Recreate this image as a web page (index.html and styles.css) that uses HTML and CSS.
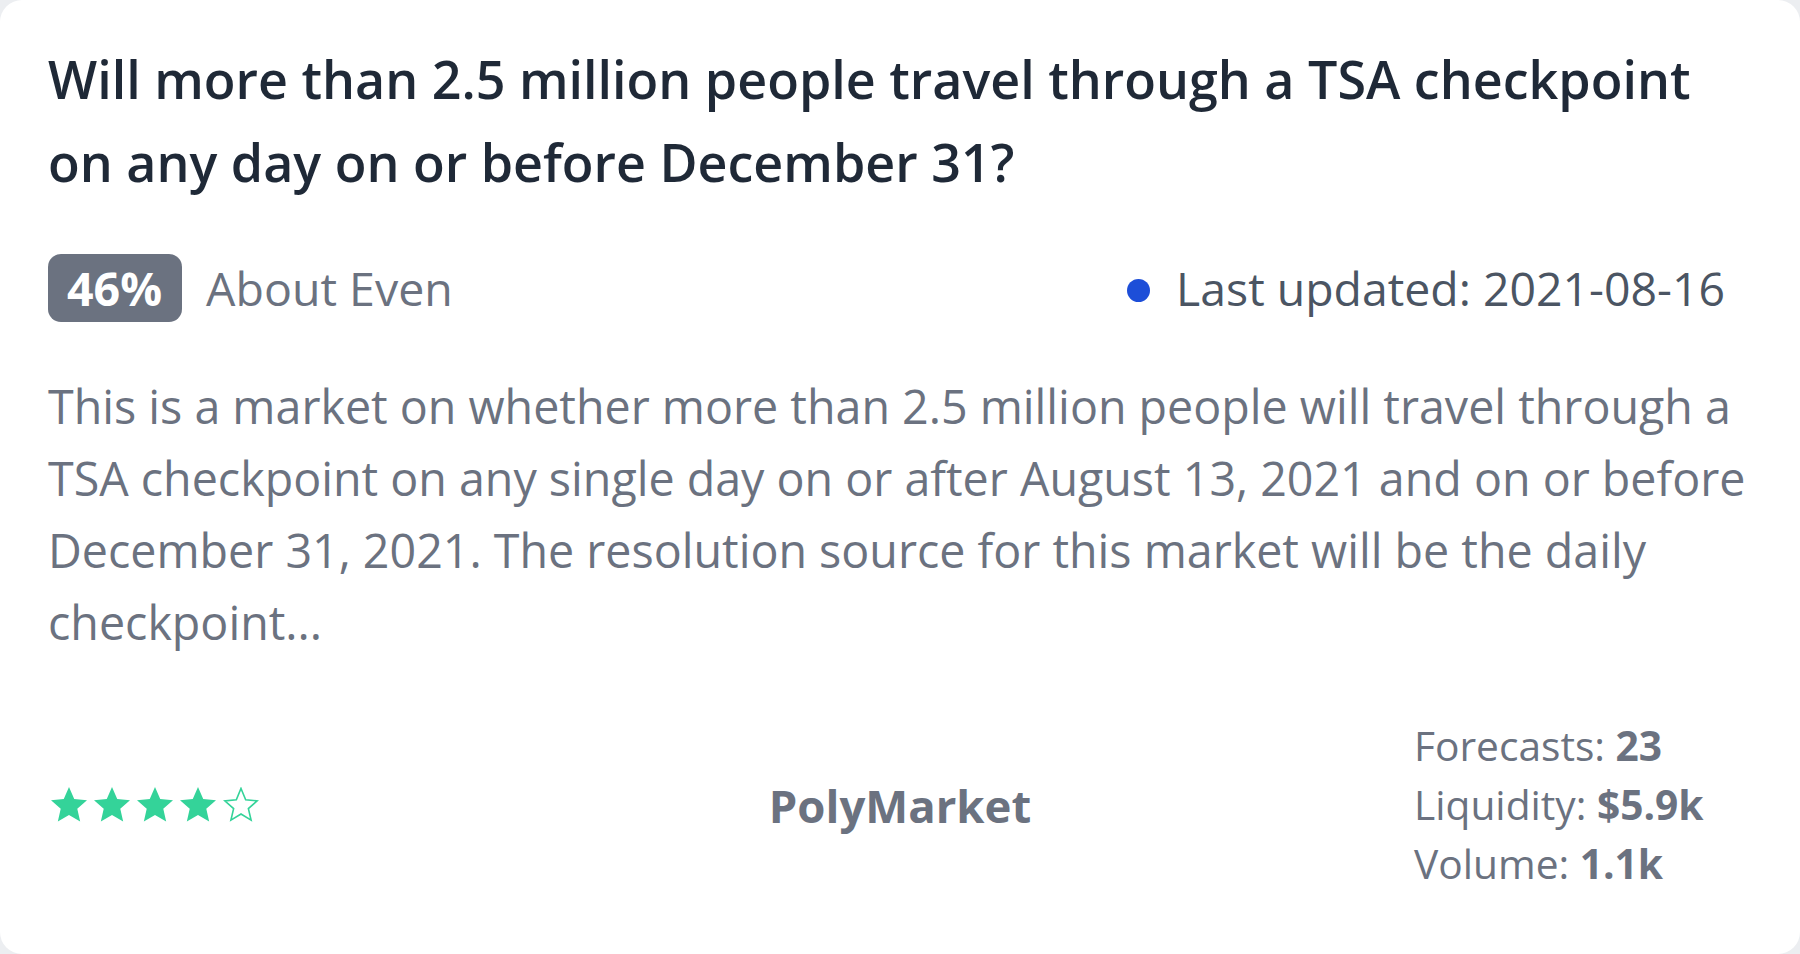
FILE: index.html
```html
<!DOCTYPE html>
<html lang="en">
<head>
<meta charset="utf-8">
<title>Market</title>
<link rel="stylesheet" href="styles.css">
</head>
<body>
<article class="card">
  <h1 class="title">Will more than 2.5 million people travel through a TSA checkpoint on any day on or before December 31?</h1>
  <div class="meta">
    <div class="meta-left">
      <span class="badge">46%</span>
      <span class="verdict">About Even</span>
    </div>
    <div class="meta-right">
      <span class="dot"></span>
      <span class="updated">Last updated: 2021-08-16</span>
    </div>
  </div>
  <p class="desc">This is a market on whether more than 2.5 million people will travel through a TSA checkpoint on any single day on or after August 13, 2021 and on or before December 31, 2021. The resolution source for this market will be the daily checkpoint...</p>
  <div class="footer">
    <div class="stars" aria-label="4 out of 5 stars">
      <svg class="star" viewBox="2 2 20 20" width="36" height="36"><polygon class="star-fill" points="12,2 14.9,8.6 22,9.3 16.6,14.1 18.2,21.2 12,17.5 5.8,21.2 7.4,14.1 2,9.3 9.1,8.6"/></svg>
      <svg class="star" viewBox="2 2 20 20" width="36" height="36"><polygon class="star-fill" points="12,2 14.9,8.6 22,9.3 16.6,14.1 18.2,21.2 12,17.5 5.8,21.2 7.4,14.1 2,9.3 9.1,8.6"/></svg>
      <svg class="star" viewBox="2 2 20 20" width="36" height="36"><polygon class="star-fill" points="12,2 14.9,8.6 22,9.3 16.6,14.1 18.2,21.2 12,17.5 5.8,21.2 7.4,14.1 2,9.3 9.1,8.6"/></svg>
      <svg class="star" viewBox="2 2 20 20" width="36" height="36"><polygon class="star-fill" points="12,2 14.9,8.6 22,9.3 16.6,14.1 18.2,21.2 12,17.5 5.8,21.2 7.4,14.1 2,9.3 9.1,8.6"/></svg>
      <svg class="star" viewBox="2 2 20 20" width="36" height="36"><polygon class="star-empty" points="12,2.8 14.6,9.1 21,9.7 16.1,14 17.6,20.4 12,17 6.4,20.4 7.9,14 3,9.7 9.4,9.1"/></svg>
    </div>
    <div class="platform">PolyMarket</div>
    <div class="stats">
      <div class="stat">Forecasts: <b>23</b></div>
      <div class="stat">Liquidity: <b>$5.9k</b></div>
      <div class="stat">Volume: <b>1.1k</b></div>
    </div>
  </div>
</article>
</body>
</html>
```
FILE: styles.css
```css
* { box-sizing: border-box; }
html, body { margin: 0; padding: 0; }
body {
  background: #eceef1;
  font-family: "Open Sans", "Noto Sans", sans-serif;
  width: 1800px;
  height: 954px;
  overflow: hidden;
}
.card {
  background: #ffffff;
  border-radius: 22px;
  height: 954px;
  padding: 37px 48px 0 48px;
  display: flex;
  flex-direction: column;
}
.title {
  margin: 0 44px 0 0;
  font-size: 52px;
  line-height: 83px;
  font-weight: 600;
  color: #1f2937;
}
.meta {
  margin-top: 51px;
  height: 68px;
  display: flex;
  align-items: center;
  justify-content: space-between;
}
.meta-left, .meta-right {
  display: flex;
  align-items: center;
}
.badge {
  height: 68px;
  padding: 0 20px 0 19px;
  display: inline-flex;
  align-items: center;
  background: #6b7280;
  color: #ffffff;
  border-radius: 13px;
  font-weight: 700;
  font-size: 46.5px;
}
.verdict {
  margin-left: 24px;
  font-size: 46.5px;
  color: #6b7280;
}
.meta-right { padding-right: 27px; }
.dot {
  width: 23px;
  height: 23px;
  border-radius: 50%;
  background: #1d4ed8;
  margin-right: 26px;
  margin-top: 5px;
}
.updated {
  font-size: 46.4px;
  color: #4b5563;
}
.desc {
  margin: 48px 0 0 0;
  font-size: 46.6px;
  line-height: 72px;
  color: #6b7280;
}
.footer {
  margin-top: 58px;
  display: grid;
  grid-template-columns: 1fr auto 1fr;
  align-items: center;
}
.stars {
  display: flex;
  gap: 7px;
  margin-left: 3px;
  justify-self: start;
}
.star { display: block; }
.star-fill { fill: #34d399; }
.star-empty { fill: none; stroke: #34d399; stroke-width: 0.9; }
.platform {
  font-size: 45.5px;
  font-weight: 700;
  color: #6b7280;
}
.stats {
  justify-self: end;
  margin-right: 48px;
  width: 290px;
  font-size: 40.7px;
  line-height: 59px;
  color: #6b7280;
}
.stat b { font-weight: 700; }
```
